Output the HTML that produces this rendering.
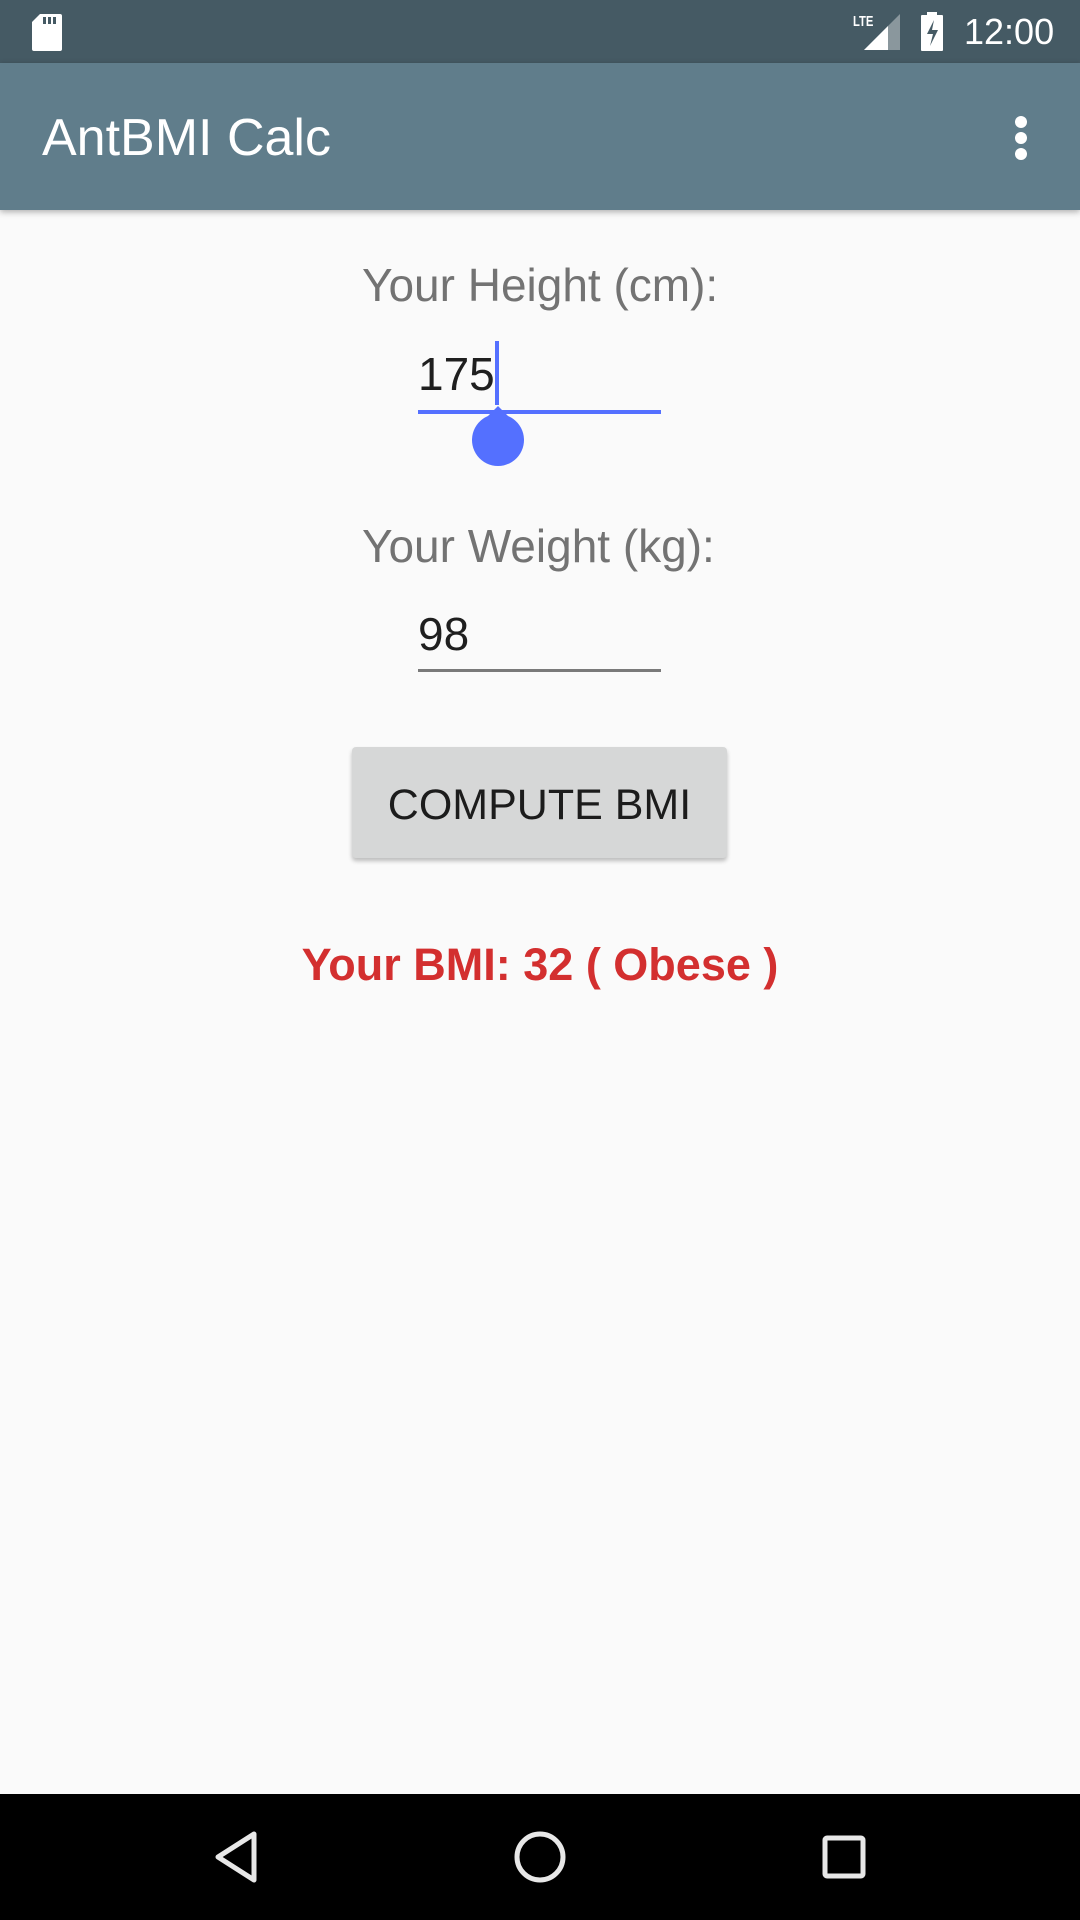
<!DOCTYPE html>
<html><head><meta charset="utf-8"><style>
*{margin:0;padding:0;box-sizing:border-box}
body{width:1080px;height:1920px;background:#fafafa;position:relative;overflow:hidden;font-family:"Liberation Sans",sans-serif}
.abs{position:absolute;white-space:nowrap}
</style></head><body>
<div class="abs" style="left:0;top:0;width:1080px;height:63px;background:#455a64"></div>
<svg class="abs" style="left:30px;top:12px" width="34" height="40" viewBox="0 0 34 40"><path d="M10 2h20a2 2 0 0 1 2 2v33a2 2 0 0 1-2 2H4a2 2 0 0 1-2-2V10z" fill="#fff"/><rect x="13" y="5" width="3" height="7" fill="#455a64"/><rect x="18" y="5" width="3" height="7" fill="#455a64"/><rect x="23" y="5" width="3" height="7" fill="#455a64"/></svg>
<div class="abs" style="left:853px;top:13px;color:#fff;font-size:15px;font-weight:bold;transform:scaleX(.75);transform-origin:left">LTE</div>
<svg class="abs" style="left:862px;top:14px" width="40" height="36"><polygon points="38,0 38,36 2,36" fill="#8a979d"/><polygon points="26,12 26,36 2,36" fill="#fff"/></svg>
<svg class="abs" style="left:920px;top:12px" width="26" height="40"><rect x="7" y="0" width="10" height="4" fill="#fff"/><rect x="1" y="3" width="22" height="36" rx="1" fill="#fff"/><path d="M14 8L7 22h6l-3 12 8-16h-6z" fill="#455a64"/></svg>
<div class="abs" style="left:964px;top:11px;color:#fff;font-size:36px">12:00</div>
<div class="abs" style="left:0;top:63px;width:1080px;height:147px;background:#607d8b;box-shadow:0 2px 6px rgba(0,0,0,.3)"></div>
<div class="abs" style="left:42px;top:108px;color:#fff;font-size:52px;line-height:60px;font-weight:500">AntBMI Calc</div>
<div class="abs" style="left:1015px;top:116px;width:12px;height:12px;border-radius:50%;background:#fff"></div>
<div class="abs" style="left:1015px;top:132px;width:12px;height:12px;border-radius:50%;background:#fff"></div>
<div class="abs" style="left:1015px;top:148px;width:12px;height:12px;border-radius:50%;background:#fff"></div>

<div class="abs" style="left:362px;top:258px;color:#737373;font-size:46px;line-height:54px">Your Height (cm):</div>
<div class="abs" style="left:418px;top:347px;color:#1f1f1f;font-size:46px;line-height:54px">175</div>
<div class="abs" style="left:495px;top:341px;width:4px;height:64px;background:#5470ff"></div>
<div class="abs" style="left:418px;top:410px;width:243px;height:4px;background:#5470ff"></div>
<svg class="abs" style="left:470px;top:402px" width="56" height="66"><path d="M28 4L18 14A26 26 0 1 0 38 14Z" fill="#5470ff"/></svg>

<div class="abs" style="left:362px;top:519px;color:#737373;font-size:46px;line-height:54px">Your Weight (kg):</div>
<div class="abs" style="left:418px;top:607px;color:#1f1f1f;font-size:46px;line-height:54px">98</div>
<div class="abs" style="left:418px;top:669px;width:243px;height:3px;background:#7a7a7a"></div>

<div class="abs" style="left:352px;top:747px;width:375px;height:111px;background:#d6d7d7;border-radius:4px;box-shadow:0 3px 4px rgba(0,0,0,.25)"></div>
<div class="abs" style="left:352px;top:778px;width:375px;text-align:center;color:#1c1c1c;font-size:43px;line-height:54px">COMPUTE BMI</div>

<div class="abs" style="left:290px;top:937px;width:500px;text-align:center;color:#d32f2f;font-size:45px;font-weight:bold;line-height:56px">Your BMI: 32 ( Obese )</div>

<div class="abs" style="left:0;top:1794px;width:1080px;height:126px;background:#000"></div>
<svg class="abs" style="left:0;top:1794px" width="1080" height="126">
<path d="M254 40L218 63L254 86Z" fill="none" stroke="#e8e8e8" stroke-width="5" stroke-linejoin="round"/>
<circle cx="540" cy="63" r="23" fill="none" stroke="#e8e8e8" stroke-width="5"/>
<rect x="825" y="44" width="38" height="38" rx="2" fill="none" stroke="#e8e8e8" stroke-width="5"/>
</svg>
</body></html>
